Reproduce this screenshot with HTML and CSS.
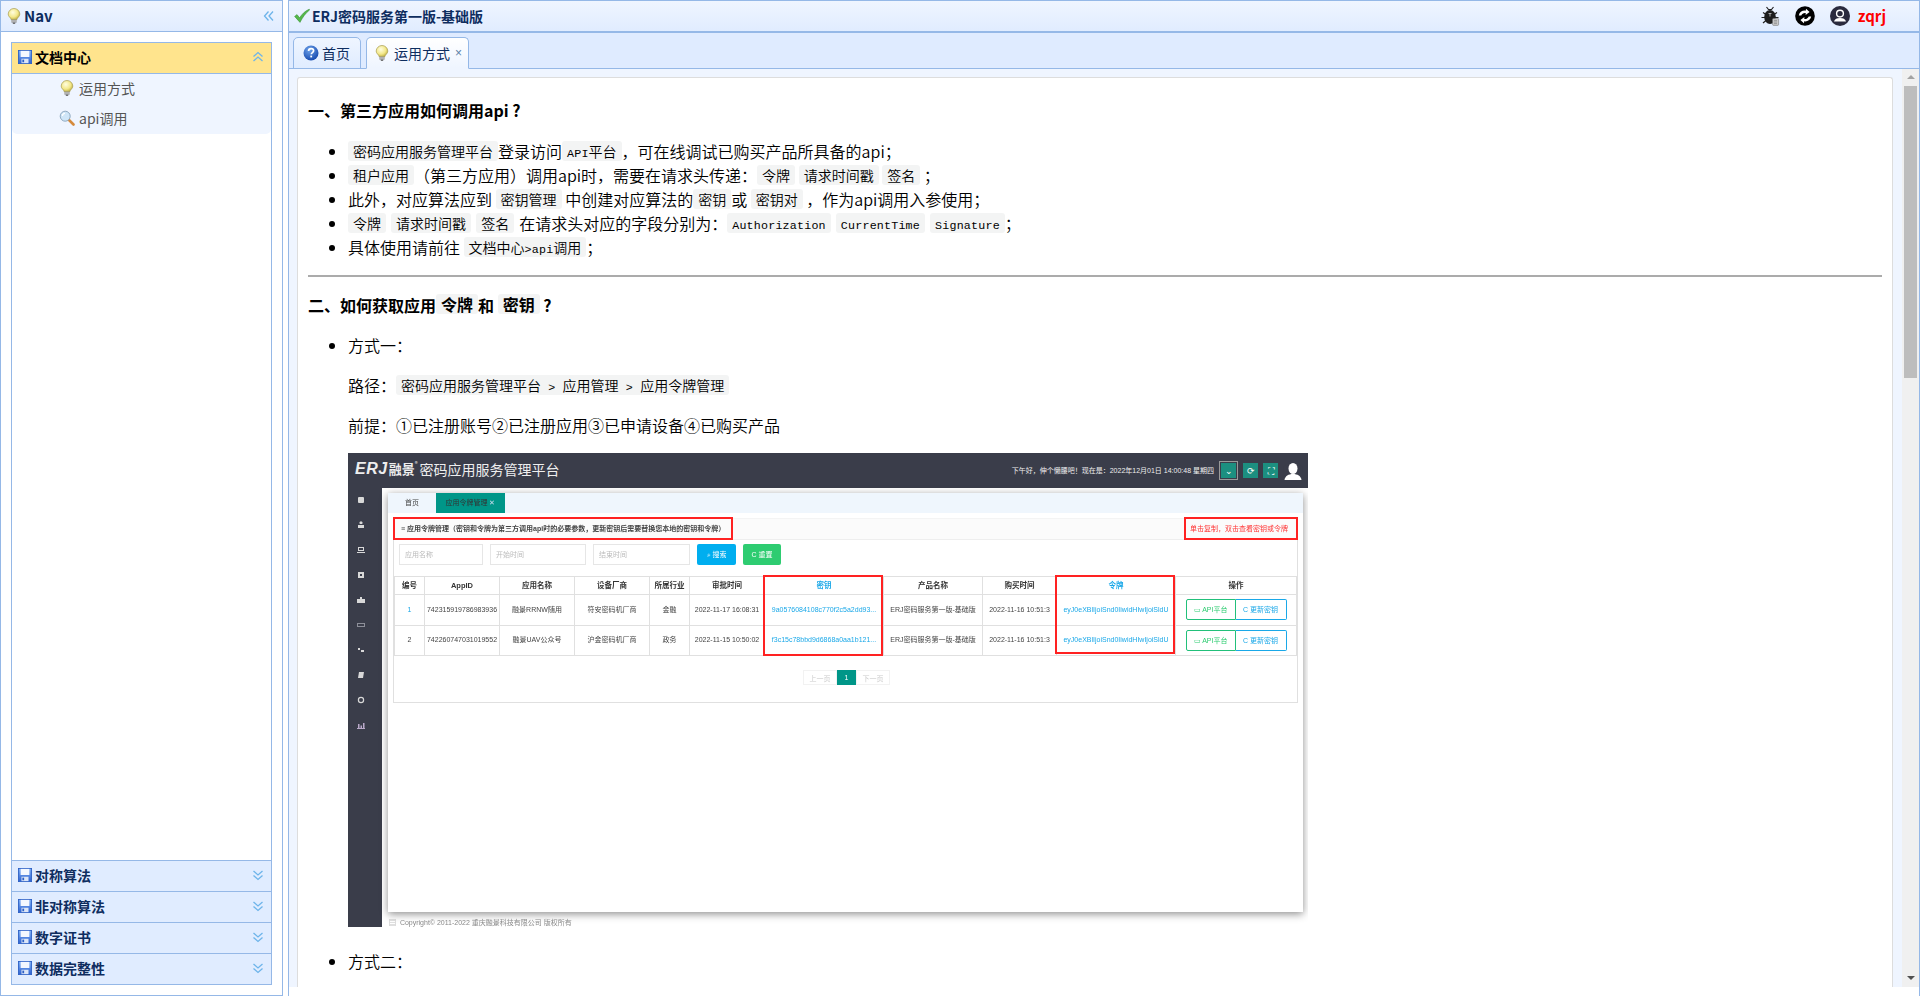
FILE: index.html
```html
<!DOCTYPE html>
<html lang="zh-CN">
<head>
  <meta charset="UTF-8" />
  <title>ERJ密码服务第一版-基础版</title>
  <link rel="stylesheet" href="styles.css">
</head>
<body>
  <!-- icon sprite -->
  <svg class="sprite" xmlns="http://www.w3.org/2000/svg">
    <defs>
      <radialGradient id="bulbFill" cx="0.4" cy="0.35" r="0.7">
        <stop offset="0" stop-color="#fffde0"/>
        <stop offset="0.6" stop-color="#f3e88a"/>
        <stop offset="1" stop-color="#b9a93c"/>
      </radialGradient>
      <linearGradient id="floppyFill" x1="0" y1="0" x2="0" y2="1">
        <stop offset="0" stop-color="#7fb0f5"/>
        <stop offset="1" stop-color="#2f62d0"/>
      </linearGradient>
      <radialGradient id="helpFill" cx="0.4" cy="0.3" r="0.8">
        <stop offset="0" stop-color="#6fa3ea"/>
        <stop offset="1" stop-color="#0b3fa8"/>
      </radialGradient>
    </defs>
    <symbol id="i-bulb" viewBox="0 0 16 16">
      <path d="M8 .5a5.800 5.800 0 0 0-5.800 5.500c0 2.100 1.600 3.100 2.400 4.300.3.500.5 1 .5 1.400h5.800c0-.4.200-.9.500-1.400.8-1.200 2.400-2.200 2.400-4.300A5.800 5.800 0 0 0 8 .5z" fill="url(#bulbFill)" stroke="#a79c4f" stroke-width=".7"/>
      <rect x="5.400" y="11.700" width="5.200" height="2.900" fill="#8d8d8d"/>
      <path d="M5.400 12.600h5.200M5.400 13.600h5.200" stroke="#dcdcdc" stroke-width=".5"/>
      <rect x="6.800" y="14.600" width="2.400" height="1.200" fill="#555"/>
    </symbol>
    <symbol id="i-floppy" viewBox="0 0 16 16">
      <rect x=".5" y=".5" width="15" height="15" fill="url(#floppyFill)" stroke="#2c5fc4"/>
      <rect x="3" y="1" width="10" height="7" fill="#f4f8ff"/>
      <rect x="4" y="10" width="8" height="5" fill="#dbe5f7"/>
      <rect x="5" y="11" width="2" height="3" fill="#2c5fc4"/>
    </symbol>
    <symbol id="i-help" viewBox="0 0 16 16">
      <circle cx="8" cy="8" r="7.500" fill="url(#helpFill)"/>
      <path d="M5.600 6c0-1.500 1.100-2.400 2.500-2.400s2.500.8 2.500 2.100c0 1.800-2.300 1.900-2.300 3.500" fill="none" stroke="#fff" stroke-width="1.700"/>
      <rect x="7.300" y="10.600" width="1.800" height="1.800" fill="#fff"/>
    </symbol>
    <symbol id="i-search" viewBox="0 0 16 16">
      <path d="M9.500 9.500l5 5" stroke="#d58a3c" stroke-width="2.600" stroke-linecap="round"/>
      <circle cx="6.200" cy="6.200" r="5" fill="#cfe6f8" stroke="#8fa9c0"/>
      <path d="M3.400 6a2.800 2.800 0 0 1 2.600-2.600" fill="none" stroke="#fff" stroke-width="1.200"/>
    </symbol>
    <symbol id="i-tick" viewBox="0 0 16 16">
      <path d="M.6 8.400l2.400-1.800 2.600 3.200C8 6 11 3 15.200 1.200l.4.800C11.600 5 8.600 9.400 6 14.400z" fill="#55b84a" stroke="#2f8a2d" stroke-width=".5"/>
    </symbol>
    <symbol id="i-up" viewBox="0 0 12 12">
      <path d="M1.500 5.500L6 1.500l4.500 4M1.500 10L6 6l4.500 4" fill="none" stroke="#6db4ea" stroke-width="1.300"/>
    </symbol>
    <symbol id="i-down" viewBox="0 0 12 12">
      <path d="M1.500 2L6 6l4.500-4M1.500 6.500L6 10.500l4.500-4" fill="none" stroke="#6db4ea" stroke-width="1.300"/>
    </symbol>
    <symbol id="i-left" viewBox="0 0 12 12">
      <path d="M5.500 1.500L1.500 6l4 4.500M10 1.500L6 6l4 4.500" fill="none" stroke="#6db4ea" stroke-width="1.300"/>
    </symbol>
    <symbol id="i-bug" viewBox="0 0 20 20">
      <path d="M6.500 1l2 2.500h3L13.500 1M3 6.500l3 2M17 6.500l-3 2M1.500 11.500H5M18.500 11.500H15M3 17l3-2.500M17 17l-3-2.500" fill="none" stroke="#222" stroke-width="1.200"/>
      <ellipse cx="10" cy="11" rx="5.800" ry="7" fill="#1d1d1d"/>
      <path d="M8.500 7.500h3M10 7.500v3" stroke="#ccc" stroke-width=".8"/>
      <rect x="12.600" y="12.400" width="6" height="7" rx="1" fill="#c9c9c9" stroke="#777" stroke-width=".6"/>
      <path d="M14 14.400h3M14 16h3M14 17.600h3" stroke="#777" stroke-width=".6"/>
    </symbol>
    <symbol id="i-sync" viewBox="0 0 20 20">
      <circle cx="10" cy="10" r="9.800" fill="#000"/>
      <path d="M3.800 9.500C4.400 6.200 7.400 4.200 10.800 4.700l.2-1.900 3.600 3.300-4 2.800.1-1.900c-2-.3-3.800.7-4.400 2.500z" fill="#fff"/>
      <path d="M16.200 10.500c-.6 3.300-3.600 5.300-7 4.800l-.2 1.900-3.600-3.300 4-2.800-.1 1.900c2 .3 3.800-.7 4.400-2.500z" fill="#fff"/>
    </symbol>
    <symbol id="i-user" viewBox="0 0 20 20">
      <circle cx="10" cy="10" r="10" fill="#2a2a3e"/>
      <circle cx="10" cy="7.600" r="3.400" fill="none" stroke="#fff" stroke-width="1.400"/>
      <path d="M4 15.600c.6-2.500 2.900-3.600 6-3.600s5.400 1.100 6 3.600z" fill="#fff"/>
    </symbol>
    <symbol id="i-avatar" viewBox="0 0 20 20">
      <circle cx="10" cy="10" r="10" fill="#3a3d4a"/>
      <ellipse cx="10" cy="7.500" rx="4.500" ry="5.500" fill="#fff"/>
      <path d="M1.500 19c.5-4 4-6 8.500-6s8 2 8.500 6z" fill="#fff"/>
    </symbol>
  </svg>

  <aside class="nav">
    <div class="nav-head">
      <svg class="icon"><use href="#i-bulb"/></svg>
      <span class="head-title">Nav</span>
      <svg class="chev chev-left"><use href="#i-left"/></svg>
    </div>
    <div class="nav-body">
      <div class="acc">
        <div class="acc-title acc-open">
          <svg class="icon"><use href="#i-floppy"/></svg>
          <span>文档中心</span>
          <svg class="chev"><use href="#i-up"/></svg>
        </div>
        <div class="acc-items">
          <div class="acc-item"><svg class="icon"><use href="#i-bulb"/></svg>运用方式</div>
          <div class="acc-item"><svg class="icon"><use href="#i-search"/></svg>api调用</div>
        </div>
        <div class="acc-fill"></div>
        <div class="acc-title">
          <svg class="icon"><use href="#i-floppy"/></svg>
          <span>对称算法</span>
          <svg class="chev"><use href="#i-down"/></svg>
        </div>
        <div class="acc-title">
          <svg class="icon"><use href="#i-floppy"/></svg>
          <span>非对称算法</span>
          <svg class="chev"><use href="#i-down"/></svg>
        </div>
        <div class="acc-title">
          <svg class="icon"><use href="#i-floppy"/></svg>
          <span>数字证书</span>
          <svg class="chev"><use href="#i-down"/></svg>
        </div>
        <div class="acc-title">
          <svg class="icon"><use href="#i-floppy"/></svg>
          <span>数据完整性</span>
          <svg class="chev"><use href="#i-down"/></svg>
        </div>
      </div>
    </div>
  </aside>

  <main class="main">
    <header class="top">
      <svg class="icon"><use href="#i-tick"/></svg>
      <span class="head-title top-title">ERJ密码服务第一版-基础版</span>
      <div class="top-tools">
        <svg class="tool"><use href="#i-bug"/></svg>
        <svg class="tool"><use href="#i-sync"/></svg>
        <svg class="tool"><use href="#i-user"/></svg>
        <span class="top-user">zqrj</span>
      </div>
    </header>

    <nav class="tabs">
      <div class="tab">
        <svg class="icon"><use href="#i-help"/></svg>
        <span>首页</span>
      </div>
      <div class="tab tab-on">
        <svg class="icon"><use href="#i-bulb"/></svg>
        <span>运用方式</span>
        <span class="tab-x">×</span>
      </div>
    </nav>

    <div class="content">
      <article class="doc">
        <h1>一、第三方应用如何调用api ?</h1>
        <ul class="doc-list">
          <li><code>密码应用服务管理平台</code>登录访问<code><span class="lat">API</span>平台</code>，可在线调试已购买产品所具备的api；</li>
          <li><code>租户应用</code>（第三方应用）调用api时，需要在请求头传递：<code>令牌</code> <code>请求时间戳</code> <code>签名</code> ；</li>
          <li>此外，对应算法应到 <code>密钥管理</code> 中创建对应算法的<code>密钥</code>或 <code>密钥对</code> ，作为api调用入参使用；</li>
          <li class="spaced"><code>令牌</code> <code>请求时间戳</code> <code>签名</code> 在请求头对应的字段分别为：<code><span class="lat">Authorization</span></code> <code><span class="lat">CurrentTime</span></code> <code><span class="lat">Signature</span></code>；</li>
          <li>具体使用请前往 <code>文档中心<span class="lat">&gt;api</span>调用</code>；</li>
        </ul>
        <hr>
        <h2>二、如何获取应用<code>令牌</code>和 <code>密钥</code> ?</h2>
        <ul class="doc-list way">
          <li>
            方式一：
            <p>路径：<code>密码应用服务管理平台<span class="lat"> &gt; </span>应用管理<span class="lat"> &gt; </span>应用令牌管理</code></p>
            <p>前提：①已注册账号②已注册应用③已申请设备④已购买产品</p>

            <div class="shot">
              <div class="shot-top">
                <div class="shot-logo"><b>ERJ</b><span>融景</span><sup>®</sup><em>密码应用服务管理平台</em></div>
                <div class="shot-status">
                  <span>下午好，伸个懒腰吧！现在是：2022年12月01日 14:00:48 星期四</span>
                  <i class="sq sq-drop">⌄</i>
                  <i class="sq">⟳</i>
                  <i class="sq">⛶</i>
                  <svg class="shot-avatar"><use href="#i-avatar"/></svg>
                </div>
              </div>
              <div class="shot-body">
                <div class="shot-side">
                  <svg viewBox="0 0 8 8"><rect x="1" y="1" width="6" height="6" rx="1"/></svg>
                  <svg viewBox="0 0 8 8"><path d="M1 7V4h6v3zM3 3a1.500 1.500 0 1 1 2 0z"/></svg>
                  <svg viewBox="0 0 8 8"><path d="M1 1h6v4H1zM2 2v2h4V2zM0 6h8v1H0z" fill-rule="evenodd"/></svg>
                  <svg viewBox="0 0 8 8"><path d="M1 1h6v6H1zM3 3v2h2V3z" fill-rule="evenodd"/></svg>
                  <svg viewBox="0 0 8 8"><path d="M0 3h8v4H0zM3 1h2v2H3z"/></svg>
                  <svg viewBox="0 0 8 8" class="dim"><path d="M0 2h8v4H0zM1 3v2h6V3z" fill-rule="evenodd"/></svg>
                  <svg viewBox="0 0 8 8"><path d="M1 2h2v2H1zM4 4h3v2H4z"/></svg>
                  <svg viewBox="0 0 8 8"><path d="M2 1h5L6 7H1z"/></svg>
                  <svg viewBox="0 0 8 8"><path d="M4 .8a3.200 3.200 0 1 0 0 6.400 3.200 3.200 0 0 0 0-6.400zm0 1.200a2 2 0 1 1 0 4 2 2 0 0 1 0-4z" fill-rule="evenodd"/></svg>
                  <svg viewBox="0 0 8 8" class="tint"><path d="M0 7h8v1H0zM1 3h1.500v4H1zM3.500 4.500H5V7H3.500zM6 2h1.500v5H6z"/></svg>
                </div>
                <div class="shot-main">
                  <div class="shot-page">
                    <div class="shot-tabs">
                      <span class="shot-tab">首页</span>
                      <span class="shot-tab shot-tab-on">应用令牌管理 <small>✕</small></span>
                    </div>
                    <div class="shot-card">
                      <div class="shot-card-head">
                        <span>≡ 应用令牌管理（密钥和令牌为第三方调用api时的必要参数，更新密钥后需要替换您本地的密钥和令牌）</span>
                        <span class="shot-note">单击复制，双击查看密钥或令牌</span>
                      </div>
                      <div class="shot-form">
                        <span class="shot-input input-a">应用名称</span>
                        <span class="shot-input input-b">开始时间</span>
                        <span class="shot-input input-c">结束时间</span>
                        <span class="shot-btn btn-blue">⌕ 搜索</span>
                        <span class="shot-btn btn-green">C 重置</span>
                      </div>
                      <table class="shot-table">
                        <colgroup>
                          <col class="c-no"><col class="c-id"><col class="c-name"><col class="c-name">
                          <col class="c-ind"><col class="c-date"><col class="c-key"><col class="c-prod">
                          <col class="c-buy"><col class="c-key"><col>
                        </colgroup>
                        <thead>
                          <tr>
                            <th>编号</th><th>AppID</th><th>应用名称</th><th>设备厂商</th><th>所属行业</th><th>审批时间</th>
                            <th class="link">密钥</th><th>产品名称</th><th>购买时间</th><th class="link">令牌</th><th>操作</th>
                          </tr>
                        </thead>
                        <tbody>
                          <tr>
                            <td class="link">1</td><td>742315919786983936</td><td>融景RRNW随用</td><td>符安密码机厂商</td><td>金融</td>
                            <td>2022-11-17 16:08:31</td><td class="link">9a0576084108c770f2c5a2dd93...</td><td>ERJ密码服务第一版-基础版</td>
                            <td>2022-11-16 10:51:3</td><td class="link">eyJ0eXBlIjoiSnd0IiwidHIwIjoiSldU</td>
                            <td><span class="ops"><span class="op-a">▭ API平台</span><span class="op-b">C 更新密钥</span></span></td>
                          </tr>
                          <tr>
                            <td>2</td><td>742260747031019552</td><td>融景UAV公众号</td><td>沪金密码机厂商</td><td>政务</td>
                            <td>2022-11-15 10:50:02</td><td class="link">f3c15c78bbd9d6868a0aa1b121...</td><td>ERJ密码服务第一版-基础版</td>
                            <td>2022-11-16 10:51:3</td><td class="link">eyJ0eXBlIjoiSnd0IiwidHIwIjoiSldU</td>
                            <td><span class="ops"><span class="op-a">▭ API平台</span><span class="op-b">C 更新密钥</span></span></td>
                          </tr>
                        </tbody>
                      </table>
                      <div class="shot-pager">
                        <span>上一页</span><span class="pager-on">1</span><span>下一页</span>
                      </div>
                      <span class="mark mark-head"></span>
                      <span class="mark mark-note"></span>
                      <span class="mark mark-key"></span>
                      <span class="mark mark-token"></span>
                    </div>
                  </div>
                  <div class="shot-foot">▤ &nbsp;Copyright© 2011-2022 重庆融景科技有限公司 版权所有</div>
                </div>
              </div>
            </div>
          </li>
          <li class="way-two">方式二：</li>
        </ul>
      </article>

      <div class="scroll">
        <span class="arrow arrow-up"></span>
        <span class="thumb"></span>
        <span class="arrow arrow-down"></span>
      </div>
    </div>
  </main>
</body>
</html>
```

FILE: styles.css
```css
html, body {
  height: 100%;
}

body {
  margin: 0;
  display: flex;
  gap: 5px;
  overflow: hidden;
  background: #fff;
  color: #000;
  font-family: "Noto Sans CJK SC", "Liberation Sans", sans-serif;
  font-size: 14px;
}

.sprite {
  position: absolute;
  width: 0;
  height: 0;
}

.icon {
  width: 16px;
  height: 16px;
  flex: none;
}

.chev {
  width: 12px;
  height: 12px;
  margin-left: auto;
  flex: none;
}

.head-title {
  color: #0e2d5f;
  font-weight: 700;
  font-size: 14px;
  line-height: 20px;
}

/* left panel */
.nav {
  width: 283px;
  flex: none;
  box-sizing: border-box;
  display: flex;
  flex-direction: column;
  border: 1px solid #95b8e7;
}

.nav-head {
  height: 30px;
  flex: none;
  display: flex;
  align-items: center;
  gap: 2px;
  padding: 0 7px 0 5px;
  border-bottom: 1px solid #95b8e7;
  background: linear-gradient(to bottom, #eff5ff, #e0ecff);
}

.nav-head .head-title {
  font-size: 15px;
}

.nav-body {
  flex: 1;
  min-height: 0;
  display: flex;
  padding: 10px;
}

.acc {
  flex: 1;
  display: flex;
  flex-direction: column;
  border: 1px solid #95b8e7;
}

.acc-title {
  height: 27px;
  flex: none;
  display: flex;
  align-items: center;
  gap: 3px;
  padding: 0 7px 3px 6px;
  border-top: 1px solid #95b8e7;
  background: #e0ecff;
  color: #0e2d5f;
  font-weight: 700;
  line-height: 20px;
}

.acc-title .icon {
  width: 14px;
  height: 14px;
}

.acc-open {
  height: 28px;
  padding-bottom: 2px;
  border-top: 0;
  border-bottom: 1px solid #95b8e7;
  background: #ffe48d;
  color: #000;
}

.acc-items {
  flex: none;
  background: #eff5ff;
  border-radius: 0 0 5px 5px;
}

.acc-item {
  height: 28px;
  display: flex;
  align-items: center;
  gap: 4px;
  padding: 0 0 2px 47px;
  color: #555;
  line-height: 20px;
}

.acc-fill {
  flex: 1;
}

/* right panel */
.main {
  flex: 1;
  min-width: 0;
  display: flex;
  flex-direction: column;
  border: 1px solid #95b8e7;
  border-width: 1px 1px 0;
}

.top {
  height: 29px;
  flex: none;
  display: flex;
  align-items: center;
  gap: 2px;
  padding: 0 0 1px 5px;
  border-bottom: 2px solid #95b8e7;
  background: linear-gradient(to bottom, #eff5ff, #e0ecff);
}

.top-tools {
  margin-left: auto;
  display: flex;
  align-items: center;
  gap: 15px;
  padding-right: 33px;
}

.tool {
  width: 20px;
  height: 20px;
}

.top-user {
  margin-left: -7px;
  color: #f00;
  font-weight: 700;
  font-size: 15px;
  line-height: 20px;
}

.tabs {
  height: 35px;
  flex: none;
  display: flex;
  align-items: flex-end;
  gap: 5px;
  padding-left: 4px;
  border-bottom: 1px solid #95b8e7;
  background: #dfebff;
}

.tab {
  height: 30px;
  margin-bottom: -1px;
  display: flex;
  align-items: center;
  gap: 3px;
  padding: 0 10px 0 9px;
  border: 1px solid #95b8e7;
  border-radius: 5px 5px 0 0;
  background: linear-gradient(to bottom, #eff5ff, #e0ecff);
  color: #0e2d5f;
  line-height: 20px;
}

.tab-on {
  gap: 4px;
  padding: 0 6px 0 7px;
  border-bottom-color: #eff5ff;
  background: linear-gradient(to bottom, #fff, #eff5ff);
}

.tab-x {
  margin-left: 1px;
  color: #5a7fa8;
  font-family: "Liberation Sans", sans-serif;
  font-size: 12px;
}

.content {
  flex: 1;
  min-height: 0;
  margin-bottom: 9px;
  display: flex;
  padding: 8px 0 0 8px;
  background: #eff5ff;
}

.doc {
  width: 1596px;
  flex: none;
  box-sizing: border-box;
  overflow: hidden;
  padding: 20px 10px 0;
  border: 1px solid #ddd;
  border-bottom: 0;
  border-radius: 3px 3px 0 0;
  background: #fff;
  font-size: 16px;
  line-height: 24px;
  font-weight: 350;
}

.doc h1, .doc h2 {
  margin: 0;
  font-size: 16px;
  font-weight: 700;
  line-height: 24px;
}

.doc h1 {
  margin-bottom: 17px;
}

.doc h2 {
  margin-bottom: 16px;
}

.doc-list {
  margin: 0;
  padding-left: 40px;
}

.spaced {
  word-spacing: 1.5px;
}

.doc hr {
  height: 2px;
  margin: 16px 0;
  border: 0;
  background: #ababab;
}

.doc code {
  display: inline-block;
  height: 20px;
  padding: 0 5px;
  border-radius: 3px;
  background: #f3f4f4;
  font-family: inherit;
  font-size: 14px;
  line-height: 20px;
  white-space: pre;
  word-spacing: 0;
  vertical-align: 1px;
}

.doc h2 code {
  font-size: 16px;
}

.lat {
  font-family: "Liberation Mono", monospace;
  font-size: 11.670px;
  letter-spacing: .2px;
}

.way p {
  margin: 16px 0;
}

.way-two {
  margin-top: 22px;
}

/* fake scrollbar */
.scroll {
  width: 17px;
  flex: none;
  margin: -8px 0 0 9px;
  display: flex;
  flex-direction: column;
  align-items: center;
  background: #f0f0f0;
}

.thumb {
  width: 13px;
  height: 292px;
  flex: none;
  background: #bdbdbd;
}

.arrow {
  width: 0;
  height: 0;
  flex: none;
  border-left: 4px solid transparent;
  border-right: 4px solid transparent;
}

.arrow-up {
  margin: 6px 0 7px;
  border-bottom: 4px solid #a3a3a3;
}

.arrow-down {
  margin-top: auto;
  margin-bottom: 7px;
  border-top: 4px solid #505050;
}

/* picture of the management platform */
.shot {
  width: 960px;
  height: 474px;
  display: flex;
  flex-direction: column;
  overflow: hidden;
  font-family: "Liberation Sans", "Noto Sans CJK SC", sans-serif;
  font-size: 7px;
  font-weight: 400;
  line-height: 10px;
  word-spacing: 0;
  color: #444;
  filter: blur(.4px);
}

.shot-top {
  height: 35px;
  flex: none;
  display: flex;
  align-items: center;
  justify-content: space-between;
  padding: 0 5px 0 7px;
  background: #3a3d4a;
  color: #eee;
}

.shot-logo {
  display: flex;
  align-items: center;
  padding-bottom: 3px;
  font-family: "Noto Sans CJK SC", sans-serif;
  font-size: 14px;
  line-height: 20px;
}

.shot-logo b {
  font-family: "Liberation Sans", sans-serif;
  font-size: 16px;
  font-style: italic;
  font-weight: 700;
  letter-spacing: .5px;
}

.shot-logo span {
  margin-left: 1px;
  font-size: 13px;
  font-weight: 700;
}

.shot-logo sup {
  margin: -10px 1px 0 0;
  font-size: 6px;
  line-height: 8px;
}

.shot-logo em {
  margin-left: 1px;
  font-style: normal;
}

.shot-status {
  display: flex;
  align-items: center;
  gap: 5px;
}

.sq {
  width: 15px;
  height: 15px;
  display: flex;
  align-items: center;
  justify-content: center;
  background: #1c8f80;
  color: #fff;
  font-style: normal;
  font-size: 9px;
}

.sq-drop {
  outline: 1px solid #999;
  outline-offset: 1px;
  margin: 0 2px;
}

.shot-avatar {
  width: 20px;
  height: 20px;
}

.shot-body {
  flex: 1;
  min-height: 0;
  display: flex;
}

.shot-side {
  width: 26px;
  flex: none;
  display: flex;
  flex-direction: column;
  align-items: center;
  gap: 17px;
  padding: 8px 8px 0 0;
  background: #3a3d4a;
}

.shot-side svg {
  width: 8px;
  height: 8px;
  fill: #d8d8d8;
}

.shot-side .dim {
  fill: #8d8f99;
}

.shot-side .tint {
  fill: #b9a9c9;
}

.shot-main {
  flex: 1;
  min-width: 0;
  display: flex;
  flex-direction: column;
  padding: 5px 5px 0 6px;
}

.shot-page {
  height: 419px;
  flex: none;
  background: #fff;
  box-shadow: 0 2px 8px rgba(0, 0, 0, .45);
}

.shot-tabs {
  height: 20px;
  display: flex;
  background: #eff6fd;
  line-height: 20px;
}

.shot-tab {
  width: 48px;
  text-align: center;
}

.shot-tab-on {
  width: 69px;
  background: #009688;
  color: #333;
}

.shot-tab small {
  font-size: 7px;
  color: #cde;
}

.shot-card {
  position: relative;
  height: 184px;
  margin: 5px 5px 0;
  border: 1px solid #e0e0e0;
  border-top: 0;
}

.shot-card-head {
  height: 20px;
  display: flex;
  justify-content: space-between;
  padding: 0 9px 0 7px;
  border-bottom: 1px solid #eee;
  border-top: 1px solid #f4f4f4;
  background: #fbfbfb;
  font-weight: 700;
  line-height: 20px;
}

.shot-note {
  color: #f33;
  font-weight: 400;
}

.shot-form {
  height: 21px;
  display: flex;
  gap: 7px;
  margin: 4px 0 11px 5px;
  color: #bbb;
}

.shot-input {
  box-sizing: border-box;
  padding-left: 5px;
  border: 1px solid #e6e6e6;
  line-height: 19px;
}

.input-a { width: 84px; }
.input-b { width: 96px; }
.input-c { width: 97px; }

.shot-btn {
  border-radius: 2px;
  color: #fff;
  text-align: center;
  line-height: 21px;
}

.btn-blue {
  width: 39px;
  background: #00aeef;
}

.btn-green {
  width: 38px;
  background: #2ecc71;
}

.shot-table {
  width: 100%;
  table-layout: fixed;
  border-collapse: collapse;
  text-align: center;
}

.shot-table th, .shot-table td {
  padding: 0;
  border: 1px solid #e0e0e0;
  overflow: hidden;
  white-space: nowrap;
}

.shot-table th {
  height: 17px;
  color: #333;
  font-size: 7.500px;
  font-weight: 700;
}

.shot-table td {
  height: 29.500px;
}

.c-no { width: 30px; }
.c-id { width: 75px; }
.c-name { width: 75px; }
.c-ind { width: 40px; }
.c-date { width: 75px; }
.c-key { width: 119px; }
.c-prod { width: 99px; }
.c-buy { width: 74px; }

.shot-table .link {
  color: #1aa8e8;
}

.ops {
  display: inline-flex;
  height: 21px;
  line-height: 19px;
}

.op-a, .op-b {
  box-sizing: border-box;
  width: 50px;
  border: 1px solid #22c07a;
  border-radius: 2px 0 0 2px;
  color: #2ecc71;
}

.op-b {
  width: 51px;
  border-color: #1aa8e8;
  border-left: 0;
  border-radius: 0 2px 2px 0;
  color: #1aa8e8;
}

.shot-pager {
  display: flex;
  width: max-content;
  height: 15px;
  margin: 14px 0 0 409px;
  color: #ccc;
  line-height: 15px;
  text-align: center;
}

.shot-pager span {
  width: 34px;
  border: 1px solid #f2f2f2;
  box-sizing: border-box;
}

.shot-pager .pager-on {
  width: 19px;
  border: 0;
  background: #009688;
  color: #fff;
}

.mark {
  position: absolute;
  box-sizing: border-box;
  border: 2px solid #f22;
}

.mark-head { left: -1px; top: -1px; width: 340px; height: 23px; }
.mark-note { right: -1px; top: -1px; width: 114px; height: 23px; }
.mark-key { left: 369px; top: 57px; width: 120px; height: 81px; }
.mark-token { left: 661px; top: 57px; width: 120px; height: 79px; }

.shot-foot {
  padding: 5px 0 0 1px;
  color: #888;
  line-height: 12px;
}
```
